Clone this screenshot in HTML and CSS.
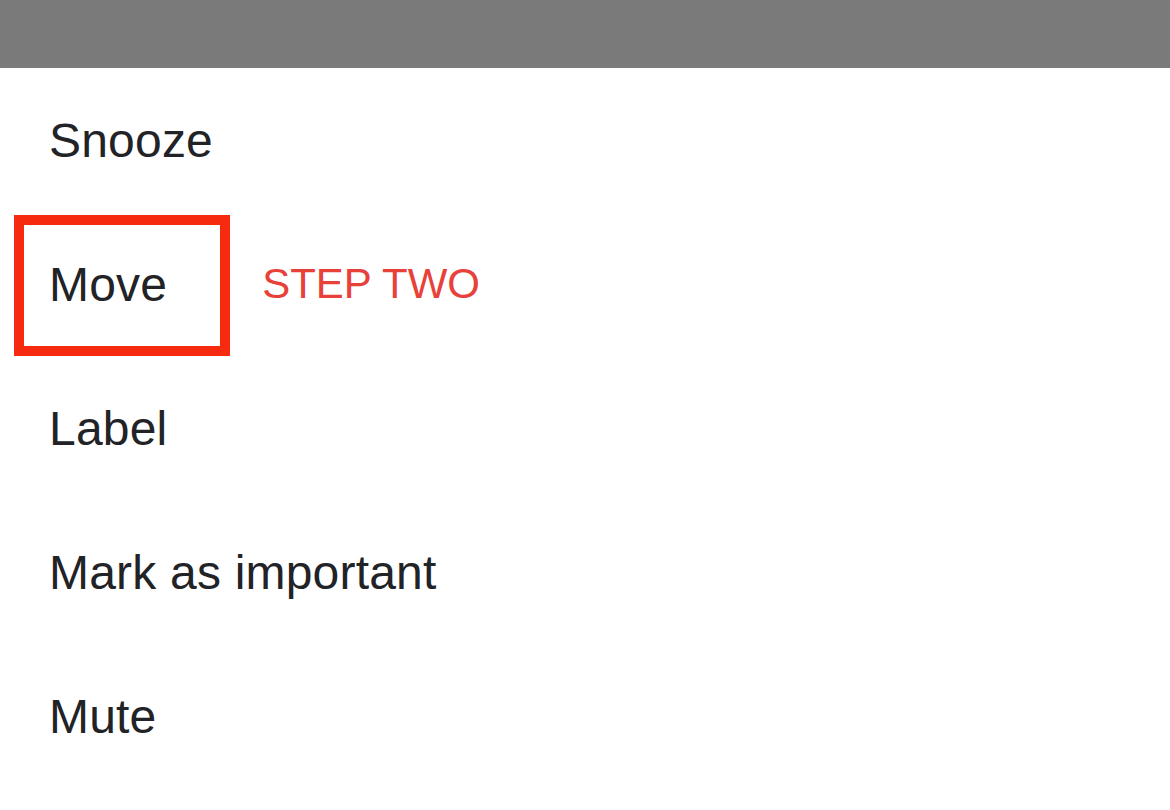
FILE: index.html
```html
<!DOCTYPE html>
<html lang="en">

<head>
    <meta charset="UTF-8">
    <meta name="viewport" content="width=device-width, initial-scale=1.0">
    <title>Move</title>
    <link rel="stylesheet" href="styles.css">
</head>

<body>
    <div class="topbar"></div>

    <ul class="menu">
        <li class="item">Snooze</li>
        <li class="item item-marked">
            <span class="mark"></span>
            Move
            <span class="step">STEP TWO</span>
        </li>
        <li class="item">Label</li>
        <li class="item">Mark as important</li>
        <li class="item">Mute</li>
    </ul>
</body>

</html>
```
FILE: styles.css
```css
body {
    margin: 0;
    background-color: #ffffff;
    font-family: "Liberation Sans", Arial, sans-serif;
    color: #222326;
}

.topbar {
    height: 68px;
    background-color: #7a7a7a;
}

.menu {
    list-style: none;
    margin: 0;
    padding: 0;
}

.item {
    position: relative;
    display: flex;
    align-items: center;
    height: 144px;
    padding-left: 49px;
    font-size: 48px;
    letter-spacing: 0.2px;
}

/* red annotation frame round "Move" */
.mark {
    position: absolute;
    left: 14px;
    top: 3px;
    width: 196px;
    height: 121px;
    border: 10px solid #f52a0e;
}

.step {
    margin-left: 95px;
    font-size: 42px;
    letter-spacing: 0;
    color: #e8413a;
}
```
